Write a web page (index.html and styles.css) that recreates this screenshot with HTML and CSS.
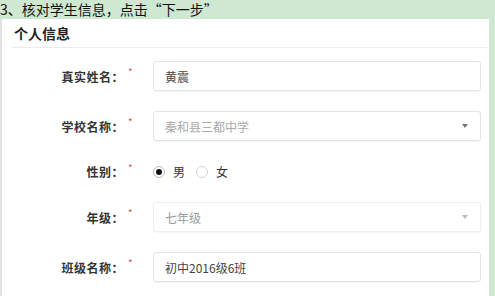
FILE: index.html
```html
<!DOCTYPE html>
<html lang="zh">
<head>
<meta charset="utf-8">
<link rel="stylesheet" href="styles.css">
</head>
<body>
<div class="page">
  <div class="step">3、核对学生信息，点击“下一步”</div>
  <div class="panel">
    <div class="panel-head">个人信息</div>
    <div class="form">
      <div class="row">
        <div class="label">真实姓名：</div><span class="req">*</span>
        <div class="field"><span class="value">黄震</span></div>
      </div>
      <div class="row">
        <div class="label">学校名称：</div><span class="req">*</span>
        <div class="field select"><span class="placeholder">秦和县三都中学</span><span class="caret"></span></div>
      </div>
      <div class="row row-radio">
        <div class="label">性别：</div><span class="req">*</span>
        <div class="radios">
          <span class="radio checked"></span><span class="rtext">男</span>
          <span class="radio"></span><span class="rtext">女</span>
        </div>
      </div>
      <div class="row">
        <div class="label">年级：</div><span class="req">*</span>
        <div class="field select disabled"><span class="placeholder">七年级</span><span class="caret"></span></div>
      </div>
      <div class="row">
        <div class="label">班级名称：</div><span class="req">*</span>
        <div class="field"><span class="value">初中2016级6班</span></div>
      </div>
    </div>
  </div>
</div>
</body>
</html>
```

FILE: styles.css
```css
* { box-sizing: border-box; }
html, body { margin: 0; padding: 0; }
body {
  background: #cfe8d1;
  font-family: "Noto Sans CJK SC", "Liberation Sans", sans-serif;
  width: 495px;
  height: 296px;
  overflow: hidden;
}
.page { display: flex; flex-direction: column; height: 296px; }
.step {
  flex: 0 0 19px;
  height: 19px;
  line-height: 19px;
  font-size: 14px;
  color: #111;
  padding-left: 0;
  white-space: nowrap;
}
.panel {
  flex: 1;
  width: 489px;
  background: #fff;
  border-left: 2px solid #e2e2e2;
  padding: 0 2px 0 10px;
}
.panel-head {
  height: 29px;
  padding-left: 2px;
  padding-top: 5px;
  font-size: 14px;
  font-weight: bold;
  line-height: 18px;
  color: #222;
  border-bottom: 1px solid #ececec;
}
.form {
  display: flex;
  flex-direction: column;
  gap: 20px;
  padding-top: 13px;
}
.row {
  display: flex;
  align-items: center;
  height: 30px;
}
.row-radio { height: 21px; }
.label {
  width: 112px;
  text-align: right;
  font-size: 12px;
  font-weight: bold;
  color: #333;
  letter-spacing: 0.5px;
}
.req {
  width: 29px;
  padding-left: 4px;
  align-self: flex-start;
  margin-top: 6px;
  font-size: 10px;
  line-height: 10px;
  color: #d9534f;
}
.row-radio .req { margin-top: 2px; }
.field {
  width: 328px;
  height: 30px;
  border: 1px solid #e3e3e3;
  border-radius: 3px;
  display: flex;
  align-items: center;
  padding: 0 12px 0 11px;
  font-size: 12px;
  box-shadow: 0 1px 1px rgba(0,0,0,0.04);
}
.value { color: #444; }
.placeholder { color: #aaa; flex: 1; }
.caret {
  width: 0; height: 0;
  border-left: 3px solid transparent;
  border-right: 3px solid transparent;
  border-top: 4px solid #777;
}
.disabled { border-color: #eeeeee; }
.disabled .placeholder { color: #999; }
.disabled .caret { border-top-color: #bbb; }
.radios {
  display: flex;
  align-items: center;
  font-size: 12px;
  color: #333;
}
.radio {
  width: 12px; height: 12px;
  border: 1px solid #d6d6d6;
  border-radius: 50%;
  display: flex;
  align-items: center;
  justify-content: center;
}
.radio.checked { border-color: #bbb; }
.radio.checked::after {
  content: "";
  width: 6px; height: 6px;
  border-radius: 50%;
  background: #111;
}
.rtext { margin-left: 8px; margin-right: 11px; }
```
